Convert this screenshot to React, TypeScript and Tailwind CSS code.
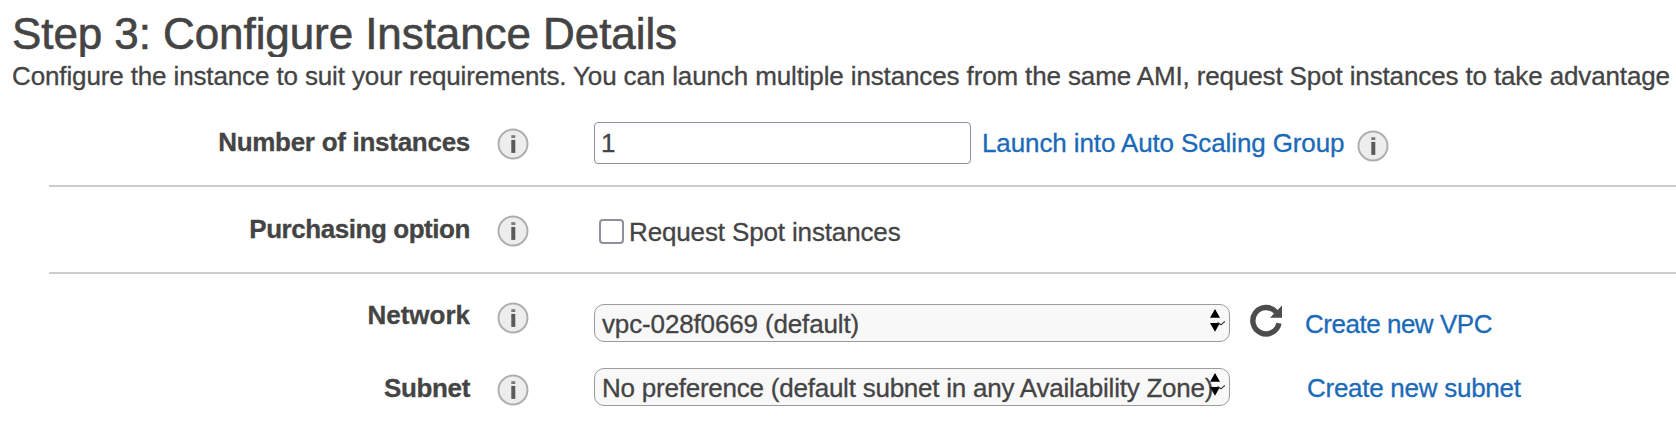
import type { ReactNode } from "react";

function InfoIcon() {
  return (
    <svg className="block size-8 shrink-0" viewBox="0 0 32 32" aria-hidden="true">
      <circle cx="16" cy="16" r="14.5" fill="#ededed" stroke="#adadad" strokeWidth="1.9" />
      <rect x="14.300" y="7.200" width="4" height="2.800" fill="#7a7a7a" />
      <rect x="14.300" y="11.900" width="4" height="13" fill="#5a5a5a" />
    </svg>
  );
}

function RefreshIcon() {
  return (
    <svg className="block h-[34px] w-[33px]" viewBox="0 0 33 34" aria-hidden="true">
      <path d="M29 19.300A13.200 13.200 0 1 1 26.200 8.200" fill="none" stroke="#4c4c4c" strokeWidth="5.400" />
      <path d="M32 1.600V13.800H20z" fill="#4c4c4c" />
    </svg>
  );
}

function SelectArrows() {
  return (
    <svg className="absolute right-[3px] top-[3px] h-[26px] w-4" viewBox="0 0 16 26" aria-hidden="true">
      <path d="M0 9.700L5 1l5 8.700zM0 15h10l-5 8.700z" fill="#000" />
      <path d="M7.500 14.500l3.500 2.300 3.800-3.300" fill="none" stroke="#333" strokeWidth="1.100" />
    </svg>
  );
}

function SelectBox({ children }: { children: ReactNode }) {
  return (
    <div className="relative h-[38px] w-[636px] rounded-[10px] border border-[#9b9b9b] bg-[#f8f8f8] pl-[7px] pt-1 whitespace-nowrap">
      {children}
      <SelectArrows />
    </div>
  );
}

function Label({ children }: { children: ReactNode }) {
  return <div className="w-[470px] shrink-0 text-right font-bold">{children}</div>;
}

export default function App() {
  return (
    <main className="h-[432px] w-[1676px] overflow-hidden bg-white pt-[9px] font-['Liberation_Sans',Arial,sans-serif] text-[26px] leading-[30px] text-[#444] [-webkit-text-stroke:0.3px]">
      <h1 className="h-12 overflow-hidden pl-3 text-[44px] leading-[50px] tracking-[-0.08px] whitespace-nowrap [-webkit-text-stroke:0.6px]">
        Step 3: Configure Instance Details
      </h1>
      <p className="mt-1 pl-3 tracking-[-0.13px] whitespace-nowrap">
        Configure the instance to suit your requirements. You can launch multiple instances from the same AMI, request Spot instances to take advantage
      </p>

      <section className="flex h-[94px] items-start">
        <div className="pt-9 tracking-[-0.28px]"><Label>Number of instances</Label></div>
        <div className="ml-[27px] pt-[37px]"><InfoIcon /></div>
        <div className="ml-[65px] pt-[31px]">
          <input
            aria-label="Number of instances"
            defaultValue="1"
            className="block h-[42px] w-[377px] rounded border border-[#8f8f9d] bg-white pl-1.5 outline-none"
          />
        </div>
        <a className="ml-[11px] w-[363px] pt-[37px] tracking-[-0.11px] whitespace-nowrap text-[#1b6ab8]">Launch into Auto Scaling Group</a>
        <div className="ml-3 pt-[39px]"><InfoIcon /></div>
      </section>

      <hr className="ml-[49px] h-0.5 border-0 bg-[#ccc]" />

      <section className="flex h-[85px] items-start">
        <div className="pt-[27px] tracking-[-0.44px]"><Label>Purchasing option</Label></div>
        <div className="ml-[27px] pt-7"><InfoIcon /></div>
        <label className="ml-[70px] flex pt-[30px]">
          <input
            type="checkbox"
            className="mt-0.5 size-[25px] appearance-none rounded border-2 border-[#8f8f9d] bg-white"
          />
          <span className="ml-[5px] tracking-[-0.14px] whitespace-nowrap">Request Spot instances</span>
        </label>
      </section>

      <hr className="ml-[49px] h-0.5 border-0 bg-[#ccc]" />

      <section className="flex h-[94px] items-start">
        <div className="pt-[26px]"><Label>Network</Label></div>
        <div className="ml-[27px] pt-7"><InfoIcon /></div>
        <div className="ml-[65px] pt-[30px] tracking-[-0.14px]"><SelectBox>vpc-028f0669 (default)</SelectBox></div>
        <div className="ml-5 pt-[30px]"><RefreshIcon /></div>
        <a className="ml-[22px] pt-[35px] tracking-[-0.48px] whitespace-nowrap text-[#1b6ab8]">Create new VPC</a>
      </section>

      <section className="flex items-start">
        <div className="pt-[5px] tracking-[-0.35px]"><Label>Subnet</Label></div>
        <div className="ml-[27px] pt-1.5"><InfoIcon /></div>
        <div className="ml-[65px] tracking-[-0.23px]"><SelectBox>No preference (default subnet in any Availability Zone)</SelectBox></div>
        <a className="ml-[77px] pt-[5px] tracking-[-0.27px] whitespace-nowrap text-[#1b6ab8]">Create new subnet</a>
      </section>
    </main>
  );
}
